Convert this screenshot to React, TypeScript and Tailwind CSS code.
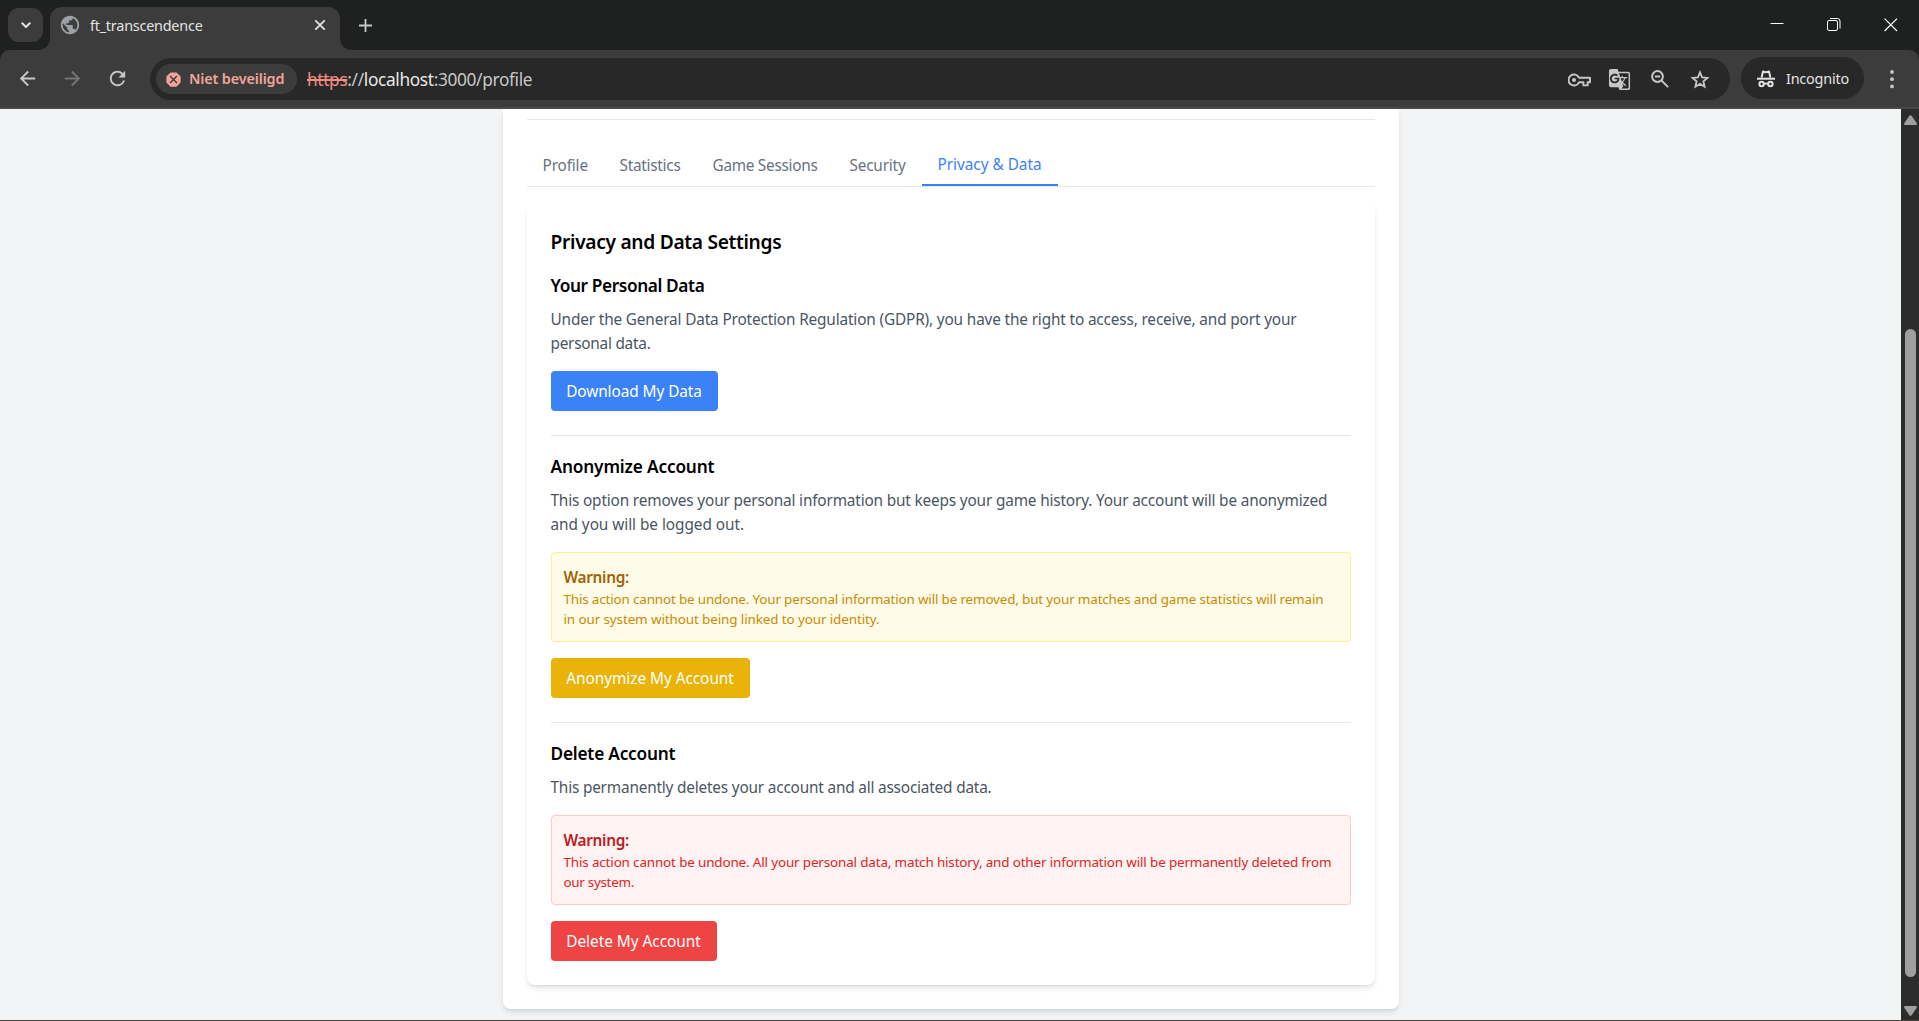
import type { ReactNode } from 'react';
import {
  MdArrowBack,
  MdArrowForward,
  MdDangerous,
  MdGTranslate,
  MdPublic,
  MdRefresh,
} from 'react-icons/md';

function TabFlare({ side }: { side: 'left' | 'right' }) {
  return (
    <svg
      viewBox="0 0 12 12"
      className={
        side === 'left'
          ? 'absolute bottom-0 -left-3 size-3 fill-[#3c3c3c]'
          : 'absolute -right-3 bottom-0 size-3 -scale-x-100 fill-[#3c3c3c]'
      }
    >
      <path d="M12 0v12H0C7 12 12 7 12 0z" />
    </svg>
  );
}

function TabStrip() {
  return (
    <div className="flex h-[50px] items-start bg-[#1f2120]">
      <button className="mt-2 ml-2 flex h-[34px] w-[35px] items-center justify-center rounded-[11px] bg-[#3c3c3c]">
        <svg viewBox="0 0 10 6" className="h-1.5 w-2.5 fill-none stroke-[#e3e3e3] stroke-2">
          <path d="M.7.7 5 5 9.3.7" />
        </svg>
      </button>
      <div className="relative mt-[7px] ml-[7px] flex h-[43px] w-[290px] items-center rounded-t-[12px] bg-[#3c3c3c] pr-[14px] pb-[7px] pl-[9px]">
        <TabFlare side="left" />
        <MdPublic className="size-[22px] text-[#9aa0a6]" />
        <span className="ml-[9px] pt-0.5 text-[14.4px] leading-5 tracking-[-0.22px] whitespace-nowrap text-[#e3e3e3]">
          ft_transcendence
        </span>
        <svg viewBox="0 0 12 12" className="ml-auto size-3 fill-none stroke-[#e3e3e3] stroke-[1.8]">
          <path d="m1.3 1.3 9.4 9.4M10.7 1.3l-9.4 9.4" />
        </svg>
        <TabFlare side="right" />
      </div>
      <svg viewBox="0 0 13 13" className="mt-[19px] ml-[19px] size-[13px] fill-none stroke-[#c7c7c7] stroke-[1.8]">
        <path d="M6.5 0v13M0 6.5h13" />
      </svg>
      <div className="mt-[18px] mr-[21px] ml-auto flex gap-[43px]">
        <svg viewBox="0 0 14 14" className="size-3.5 fill-none stroke-white">
          <path d="M.5 5.5h13" />
        </svg>
        <svg viewBox="0 0 14 14" className="size-3.5 fill-none stroke-white">
          <rect x=".5" y="2.5" width="10" height="10" rx="1.5" />
          <path d="M3 .5h7.5a2.5 2.5 0 0 1 2.5 2.5v7.5" />
        </svg>
        <svg viewBox="0 0 14 14" className="size-3.5 fill-none stroke-white stroke-[1.2]">
          <path d="m.6.6 12.4 12.4M13 .6.6 13" />
        </svg>
      </div>
    </div>
  );
}

function KeyIcon() {
  return (
    <svg viewBox="0 0 23 14" className="mt-px h-3.5 w-[23px] fill-none stroke-[#c7c7c7] stroke-[1.9]">
      <path d="M11 4.700A5.500 5.500 0 1 0 11 9.300h4.400v3.100h4.200V9.300H22V4.700z" strokeLinejoin="round" />
      <circle cx="6" cy="7" r="2" className="fill-[#c7c7c7] stroke-none" />
    </svg>
  );
}

function ZoomOutIcon() {
  return (
    <svg viewBox="0 0 18 18" className="mx-[3px] size-[18px] fill-none stroke-[#c7c7c7] stroke-2">
      <circle cx="6.500" cy="6.500" r="5.400" />
      <path d="m10.400 10.400 6.700 6.700M3.900 6.500h5.200" />
    </svg>
  );
}

function StarIcon() {
  return (
    <svg viewBox="0 0 20 19" className="mx-px h-[19px] w-5 fill-none stroke-[#c7c7c7] stroke-[1.8]">
      <path d="m10 2.400 2.100 5 5.400.5-4.100 3.500 1.200 5.300-4.600-2.800-4.600 2.800 1.200-5.300-4.100-3.500 5.400-.5z" />
    </svg>
  );
}

function IncognitoIcon() {
  return (
    <svg viewBox="0 0 18 18" className="mt-0.5 size-[18px] fill-none stroke-[#e3e3e3]">
      <path d="M4.6 7.6 6 1.5c2 .9 4 .9 6 0l1.4 6.1" strokeWidth="2" strokeLinejoin="round" />
      <path d="M0 8.7h18" strokeWidth="2" />
      <circle cx="4.6" cy="14" r="2.2" strokeWidth="2" />
      <circle cx="13.4" cy="14" r="2.2" strokeWidth="2" />
      <path d="M7 13.6h4" strokeWidth="1.8" />
    </svg>
  );
}

function Toolbar() {
  return (
    <div className="bg-[#1f2120]">
      <div className="flex h-[59px] items-start rounded-t-[10px] border-b-2 border-[#484848] bg-[#3c3c3c]">
        <div className="mt-[17px] ml-4 flex gap-[22px]">
          <MdArrowBack className="size-[23px] text-[#c7c7c7]" />
          <MdArrowForward className="size-[23px] text-[#757575]" />
          <MdRefresh className="size-[23px] text-[#c7c7c7]" />
        </div>
        <div className="mt-2 ml-[21px] flex h-[42px] w-[1580px] items-center rounded-full bg-[#282828] pl-1.5">
          <div className="flex h-[30px] w-[141px] items-center rounded-full bg-[#3c3c3c] pl-2">
            <MdDangerous className="size-[19px] text-[#f2a49b]" />
            <span className="ml-1.5 text-[14.4px] leading-5 font-semibold tracking-[-0.13px] whitespace-nowrap text-[#f2a49b]">
              Niet beveiligd
            </span>
          </div>
          <p className="ml-2.5 pt-0.5 text-[17.3px] leading-6 tracking-[-0.35px] whitespace-nowrap text-[#c7c7c7]">
            <span className="text-[#f28b82] line-through decoration-2">https</span>
            ://<span className="text-[#e8e8e8]">localhost</span>:3000/profile
          </p>
          <div className="mr-[19px] ml-auto flex items-center gap-[17px] text-[#c7c7c7]">
            <KeyIcon />
            <MdGTranslate className="mt-px size-[23px]" />
            <ZoomOutIcon />
            <StarIcon />
          </div>
        </div>
        <div className="mt-[7px] ml-[11px] flex h-[42px] w-[123px] items-center rounded-full bg-[#282828] pl-4">
          <IncognitoIcon />
          <span className="ml-[11px] pt-0.5 text-[14.4px] leading-5 tracking-[-0.2px] text-[#e3e3e3]">Incognito</span>
        </div>
        <svg viewBox="0 0 4 19" className="mt-5 ml-[26px] h-[19px] w-1 fill-[#c7c7c7]">
          <circle cx="2" cy="2" r="1.9" />
          <circle cx="2" cy="9.2" r="1.9" />
          <circle cx="2" cy="16.4" r="1.9" />
        </svg>
      </div>
    </div>
  );
}

function Tabs() {
  return (
    <nav className="flex h-[43px] border-b border-gray-200 text-[15.36px] leading-6 whitespace-nowrap text-gray-500">
      <button className="w-[77px] pt-0.5 pl-4 text-left tracking-[-0.15px]">Profile</button>
      <button className="w-[93px] pt-0.5 pl-4 text-left tracking-[-0.27px]">Statistics</button>
      <button className="w-[137px] pt-0.5 pl-4 text-left tracking-[-0.29px]">Game Sessions</button>
      <button className="w-[88px] pt-0.5 pl-4 text-left tracking-[-0.2px]">Security</button>
      <button className="w-[136px] border-b-2 border-[#3b82f6] pt-0.5 pl-4 text-left tracking-[-0.03px] text-[#3b82f6]">
        Privacy &amp; Data
      </button>
    </nav>
  );
}

function Divider() {
  return <div className="mt-6 mb-4 h-px bg-gray-200" />;
}

function SectionTitle({ className, children }: { className: string; children: ReactNode }) {
  return (
    <h4 className={`mb-[7px] pt-px text-[17.28px] leading-7 font-semibold whitespace-nowrap ${className}`}>
      {children}
    </h4>
  );
}

function SettingsCard() {
  return (
    <section className="mt-4 rounded-lg bg-white p-6 text-[15.36px] leading-6 whitespace-nowrap shadow-md">
      <h3 className="mb-[15px] pt-px text-[19.2px] leading-7 font-semibold tracking-[-0.31px]">
        Privacy and Data Settings
      </h3>

      <SectionTitle className="tracking-[-0.39px]">Your Personal Data</SectionTitle>
      <p className="mb-[15px] pt-px text-[#4b5563]">
        <span className="block tracking-[-0.155px]">
          Under the General Data Protection Regulation (GDPR), you have the right to access, receive, and port your
        </span>
        <span className="block tracking-[-0.25px]">personal data.</span>
      </p>
      <button className="block h-10 w-[167px] rounded bg-[#3b82f6] pt-0.5 tracking-[-0.07px] text-white">
        Download My Data
      </button>

      <Divider />
      <SectionTitle className="tracking-[-0.17px]">Anonymize Account</SectionTitle>
      <p className="mb-[15px] pt-px text-[#4b5563]">
        <span className="block tracking-[-0.169px]">
          This option removes your personal information but keeps your game history. Your account will be anonymized
        </span>
        <span className="block tracking-[-0.05px]">and you will be logged out.</span>
      </p>
      <div className="mb-4 rounded border border-[#fef08a] bg-[#fefce8] p-3">
        <p className="-mb-px pt-px font-semibold tracking-[-0.3px] text-[#a16207]">Warning:</p>
        <p className="text-[13.44px] leading-5 text-[#ca8a04]">
          <span className="block tracking-[-0.16px]">
            This action cannot be undone. Your personal information will be removed, but your matches and game statistics
            will remain
          </span>
          <span className="block tracking-[-0.108px]">in our system without being linked to your identity.</span>
        </p>
      </div>
      <button className="block h-10 w-[199px] rounded bg-[#eab308] pt-0.5 tracking-[-0.03px] text-white">
        Anonymize My Account
      </button>

      <Divider />
      <SectionTitle className="tracking-[-0.22px]">Delete Account</SectionTitle>
      <p className="mb-[15px] pt-px tracking-[-0.19px] text-[#4b5563]">
        This permanently deletes your account and all associated data.
      </p>
      <div className="mb-4 rounded border border-[#fecaca] bg-[#fef2f2] p-3">
        <p className="-mb-px pt-px font-semibold tracking-[-0.3px] text-[#b91c1c]">Warning:</p>
        <p className="text-[13.44px] leading-5 text-[#dc2626]">
          <span className="block tracking-[-0.15px]">
            This action cannot be undone. All your personal data, match history, and other information will be
            permanently deleted from
          </span>
          <span className="block tracking-[-0.3px]">our system.</span>
        </p>
      </div>
      <button className="block h-10 w-[166px] rounded bg-[#ef4444] pt-0.5 tracking-[-0.02px] text-white">
        Delete My Account
      </button>
    </section>
  );
}

function Scrollbar() {
  return (
    <div className="flex w-[18px] flex-col items-center bg-[#2c2c2c] pl-px">
      <svg viewBox="0 0 13 10" className="mt-1.5 h-2.5 w-[13px] fill-[#9f9f9f]">
        <path d="M5.4.8a1.3 1.3 0 0 1 2.2 0l5 7.3c.6.9.1 1.9-.8 1.9H1.2C.3 10-.2 9 .4 8.1z" />
      </svg>
      <div className="mt-[204px] h-[648px] w-[11px] rounded-full bg-[#9f9f9f]" />
      <svg viewBox="0 0 13 10" className="mt-[29px] h-2.5 w-[13px] rotate-180 fill-[#9f9f9f]">
        <path d="M5.4.8a1.3 1.3 0 0 1 2.2 0l5 7.3c.6.9.1 1.9-.8 1.9H1.2C.3 10-.2 9 .4 8.1z" />
      </svg>
    </div>
  );
}

export default function App() {
  return (
    <div className="flex h-[1021px] w-[1919px] flex-col overflow-hidden font-['Noto_Sans',sans-serif] text-black">
      <TabStrip />
      <Toolbar />
      <div className="flex h-[911px] bg-gray-100">
        <main className="flex flex-1 justify-center overflow-hidden">
          <div className="h-[900px] w-[896px] rounded-b-lg bg-white px-6 shadow-md">
            <div className="mt-2.5 mb-6 h-px bg-gray-200" />
            <Tabs />
            <SettingsCard />
          </div>
        </main>
        <Scrollbar />
      </div>
      <div className="h-px bg-[#4a4340]" />
    </div>
  );
}
